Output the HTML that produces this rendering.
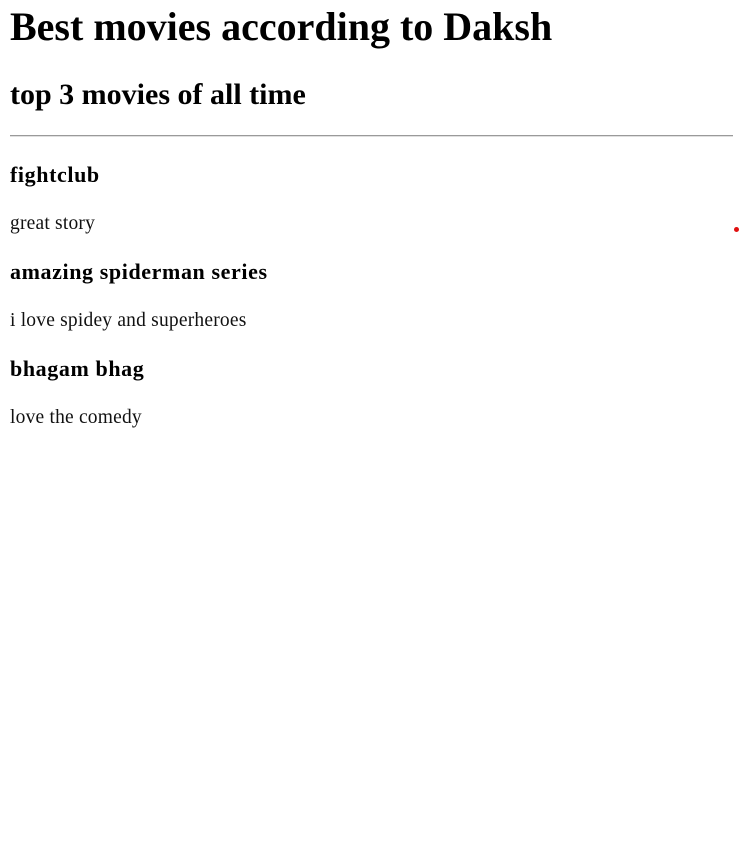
<!DOCTYPE html>
<html><head><style>
body{margin:0;background:#fff;font-family:"Liberation Serif",serif;color:#000;}
.t{position:absolute;left:10px;white-space:nowrap;}
.h1{font-size:40px;font-weight:bold;line-height:46px;}
.h2{font-size:30px;font-weight:bold;line-height:34px;}
.h3{font-size:22px;font-weight:bold;line-height:25px;letter-spacing:0.6px;}
.p{font-size:19.5px;line-height:23px;color:#111;letter-spacing:0.2px;}
</style></head><body>
<div class="t h1" style="top:4px">Best movies according to Daksh</div>
<div class="t h2" style="top:78px">top 3 movies of all time</div>
<div style="position:absolute;left:10px;top:135px;width:723px;height:0;border-top:1px solid #9a9a9a;border-bottom:1px solid #e0e0e0"></div>
<div class="t h3" style="top:162px">fightclub</div>
<div class="t p" style="top:212px">great story</div>
<div class="t h3" style="top:259px">amazing spiderman series</div>
<div class="t p" style="top:309px">i love spidey and superheroes</div>
<div class="t h3" style="top:356px">bhagam bhag</div>
<div class="t p" style="top:406px">love the comedy</div>
<div style="position:absolute;left:734px;top:227px;width:5px;height:5px;border-radius:50%;background:#e01010"></div>
</body></html>
